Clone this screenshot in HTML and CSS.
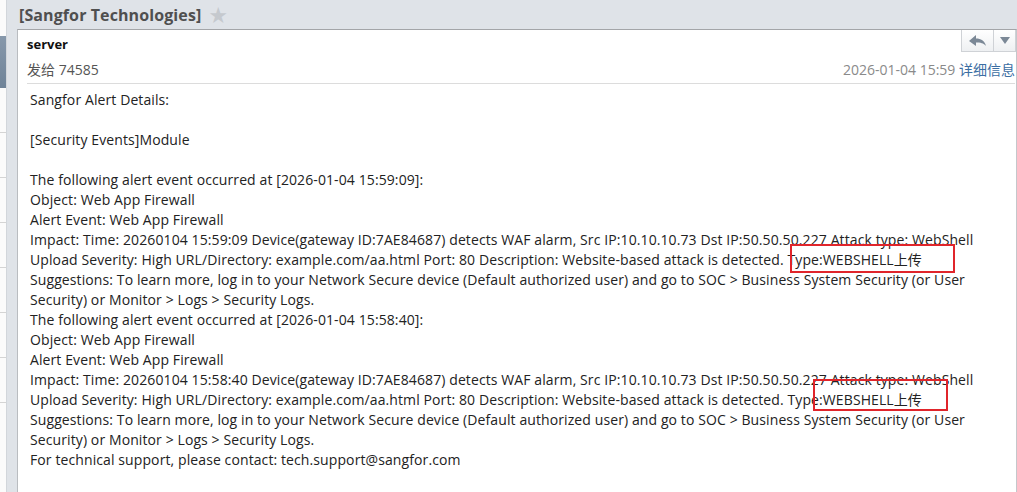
FILE: index.html
```html
<!DOCTYPE html>
<html lang="zh-CN">
<head>
  <meta charset="UTF-8">
  <title>[Sangfor Technologies]</title>
  <link rel="stylesheet" href="styles.css">
</head>
<body>
  <div class="sidebar">
    <div class="side-item"></div>
    <div class="side-item selected"></div>
    <div class="side-item"></div>
    <div class="side-item"></div>
    <div class="side-item"></div>
    <div class="side-item"></div>
    <div class="side-item"></div>
    <div class="side-item"></div>
    <div class="side-item"></div>
  </div>

  <div class="main">
    <div class="title-bar">
      <h1>[Sangfor Technologies]</h1>
      <span class="star">&#9733;</span>
    </div>

    <div class="mail">
      <div class="actions">
        <button class="reply" title="回复">
          <svg width="18" height="12" viewBox="0 0 18 12"><path d="M0 6 L7 0 L7 3.5 C12 3.5 15.5 5.5 17 11 C14.5 8 11.5 7.5 7 7.5 L7 11 Z" fill="#7b8896"/></svg>
        </button>
        <button class="more" title="更多">
          <svg width="10" height="7" viewBox="0 0 10 7"><path d="M0 0 L10 0 L5 7 Z" fill="#7b8896"/></svg>
        </button>
      </div>

      <div class="mail-head">
        <div class="sender">server</div>
        <div class="meta">
          <span class="to">发给 74585</span>
          <span class="date">2026-01-04 15:59 <a href="#">详细信息</a></span>
        </div>
      </div>

      <div class="mail-body">
        <p>Sangfor Alert Details:</p>
        <p class="blank"></p>
        <p>[Security Events]Module</p>
        <p class="blank"></p>
        <p>The following alert event occurred at [2026-01-04 15:59:09]:</p>
        <p>Object: Web App Firewall</p>
        <p>Alert Event: Web App Firewall</p>
        <p>Impact: Time: 20260104 15:59:09 Device(gateway ID:7AE84687) detects WAF alarm, Src IP:10.10.10.73 Dst IP:50.50.50.227 Attack type: WebShell</p>
        <p>Upload Severity: High URL/Directory: example.com/aa.html Port: 80 Description: Website-based attack is detected. Type:WEBSHELL上传</p>
        <p>Suggestions: To learn more, log in to your Network Secure device (Default authorized user) and go to SOC &gt; Business System Security (or User</p>
        <p>Security) or Monitor &gt; Logs &gt; Security Logs.</p>
        <p>The following alert event occurred at [2026-01-04 15:58:40]:</p>
        <p>Object: Web App Firewall</p>
        <p>Alert Event: Web App Firewall</p>
        <p>Impact: Time: 20260104 15:58:40 Device(gateway ID:7AE84687) detects WAF alarm, Src IP:10.10.10.73 Dst IP:50.50.50.227 Attack type: WebShell</p>
        <p>Upload Severity: High URL/Directory: example.com/aa.html Port: 80 Description: Website-based attack is detected. Type:WEBSHELL上传</p>
        <p>Suggestions: To learn more, log in to your Network Secure device (Default authorized user) and go to SOC &gt; Business System Security (or User</p>
        <p>Security) or Monitor &gt; Logs &gt; Security Logs.</p>
        <p>For technical support, please contact: tech.support@sangfor.com</p>

        <div class="mark mark-1"></div>
        <div class="mark mark-2"></div>
      </div>
    </div>
  </div>
</body>
</html>
```

FILE: styles.css
```css
body {
  margin: 0;
  height: 100vh;
  display: flex;
  overflow: hidden;
  background-color: #dfe3e8;
  font-family: "Open Sans", "Noto Sans CJK SC", sans-serif;
  color: #222;
}
.sidebar {
  width: 6px;
  background-color: #fbfbfb;
  border-right: 1px solid #d2d6db;
  display: flex;
  flex-direction: column;
}
.side-item {
  height: 44px;
  border-bottom: 1px solid #d4d4d4;
}
.side-item:first-child {
  height: 36px;
  border-bottom: none;
}
.side-item.selected {
  height: 52px;
  background: linear-gradient(#8798ab, #6f8398);
  border-bottom: none;
}
.main {
  flex: 1;
  display: flex;
  flex-direction: column;
  padding-left: 10px;
}
.title-bar {
  height: 29px;
  display: flex;
  align-items: center;
  gap: 8px;
  padding-left: 2px;
}
.title-bar h1 {
  margin: 0;
  font-size: 16px;
  font-weight: bold;
  color: #4f4f4f;
  letter-spacing: 0.1px;
}
.star {
  color: #c5c9ce;
  font-size: 18px;
  line-height: 1;
}
.mail {
  flex: 1;
  position: relative;
  background-color: #fff;
  border-top: 1px solid #a3a5a8;
  border-left: 1px solid #b9bcc0;
  border-right: 1px solid #c4c7cb;
  padding: 0 1px 0 9px;
}
.actions {
  position: absolute;
  top: 0;
  right: 0;
  display: flex;
}
.actions button {
  height: 22px;
  border: 1px solid #cfd2d6;
  border-top: none;
  background: linear-gradient(#ffffff, #eef0f2);
  display: flex;
  align-items: center;
  justify-content: center;
  padding: 0;
}
.actions .reply {
  width: 33px;
}
.actions .more {
  width: 22px;
  border-left: none;
}
.mail-head {
  border-bottom: 1px solid #dcdcdc;
}
.sender {
  height: 29px;
  line-height: 29px;
  font-size: 13px;
  font-weight: bold;
  color: #111;
}
.meta {
  display: flex;
  justify-content: space-between;
  height: 24px;
  line-height: 22px;
  font-size: 14px;
}
.to {
  color: #555;
}
.date {
  color: #8a8a8a;
}
.date a {
  color: #3b6ea3;
  text-decoration: none;
}
.mail-body {
  position: relative;
  padding: 6px 0 0 3px;
  font-size: 14px;
  letter-spacing: 0.1px;
  color: #222;
}
.mail-body p {
  margin: 0;
  height: 20px;
  line-height: 20px;
  white-space: nowrap;
}
.mark {
  position: absolute;
  border: 2px solid #e0252b;
}
.mark-1 {
  left: 763px;
  top: 160px;
  width: 161px;
  height: 25px;
}
.mark-2 {
  left: 786px;
  top: 295px;
  width: 131px;
  height: 28px;
}
```
